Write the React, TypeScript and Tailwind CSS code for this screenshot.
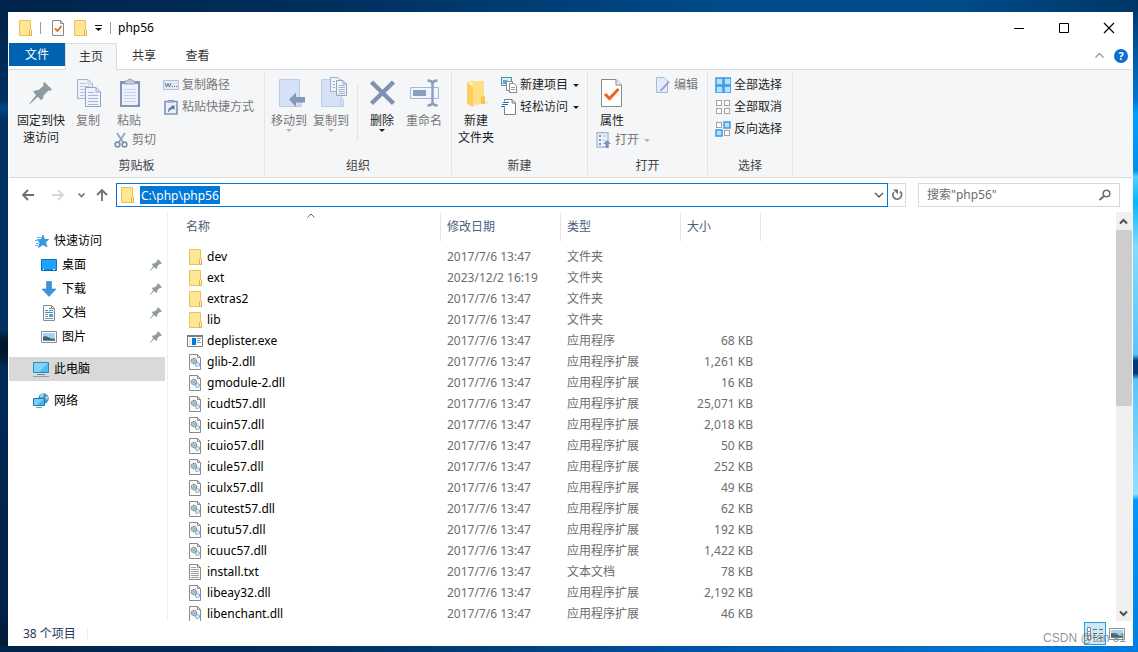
import React from 'react';

type FileKind = 'folder' | 'exe' | 'dll' | 'txt';

interface FileRow {
  name: string;
  kind: FileKind;
  date?: string;
  size?: string;
}

const files: FileRow[] = [
  { name: 'dev', kind: 'folder' },
  { name: 'ext', kind: 'folder', date: '2023/12/2 16:19' },
  { name: 'extras2', kind: 'folder' },
  { name: 'lib', kind: 'folder' },
  { name: 'deplister.exe', kind: 'exe', size: '68 KB' },
  { name: 'glib-2.dll', kind: 'dll', size: '1,261 KB' },
  { name: 'gmodule-2.dll', kind: 'dll', size: '16 KB' },
  { name: 'icudt57.dll', kind: 'dll', size: '25,071 KB' },
  { name: 'icuin57.dll', kind: 'dll', size: '2,018 KB' },
  { name: 'icuio57.dll', kind: 'dll', size: '50 KB' },
  { name: 'icule57.dll', kind: 'dll', size: '252 KB' },
  { name: 'iculx57.dll', kind: 'dll', size: '49 KB' },
  { name: 'icutest57.dll', kind: 'dll', size: '62 KB' },
  { name: 'icutu57.dll', kind: 'dll', size: '192 KB' },
  { name: 'icuuc57.dll', kind: 'dll', size: '1,422 KB' },
  { name: 'install.txt', kind: 'txt', size: '78 KB' },
  { name: 'libeay32.dll', kind: 'dll', size: '2,192 KB' },
  { name: 'libenchant.dll', kind: 'dll', size: '46 KB' },
];

const kindLabels: Record<FileKind, string> = {
  folder: '文件夹',
  exe: '应用程序',
  dll: '应用程序扩展',
  txt: '文本文档',
};

/* ---------- icons ---------- */

function Icon({ size = 16, children }: { size?: number; children: React.ReactNode }) {
  return (
    <svg width={size} height={size} viewBox={`0 0 ${size} ${size}`} fill="none" className="shrink-0" aria-hidden="true">
      {children}
    </svg>
  );
}

const FolderIcon = () => (
  <Icon>
    <path d="M2.5 .5H13.5V9L14.5 10.5V15.5H2.5Z" fill="#ffe596" stroke="#e9c35c" />
    <path d="M12.5 15V10.5L13.5 9.5L14.5 10.5V15.5H12.5" fill="#ffefb5" stroke="#e3b341" />
  </Icon>
);

const Page = ({ stroke = '#8a8a8a' }: { stroke?: string }) => (
  <>
    <path d="M2.5 .5H10.5L13.5 3.5V15.5H2.5Z" fill="#fbfbfb" stroke={stroke} />
    <path d="M10.5 .5V3.5H13.5" stroke={stroke} />
  </>
);

const DllIcon = () => (
  <Icon>
    <Page />
    <circle cx="7" cy="7" r="2.6" fill="#d3dade" stroke="#6f7f89" strokeWidth="1.2" strokeDasharray="1.3 .5" />
    <circle cx="7" cy="7" r="1" fill="#fff" stroke="#6f7f89" strokeWidth=".7" />
    <circle cx="10.5" cy="10.5" r="2" fill="#d9eefa" stroke="#6fabd4" strokeWidth="1.2" strokeDasharray="1.2 .5" />
  </Icon>
);

const TxtIcon = () => (
  <Icon>
    <Page />
    <path d="M4 3.5H9M4 5.5H12M4 7.5H12M4 9.5H12M4 11.5H12M4 13.5H12" stroke="#a0a0a0" />
  </Icon>
);

const ExeIcon = () => (
  <Icon>
    <path d="M.5 2.5H15.5V13.5H.5Z" fill="#fff" stroke="#737e86" />
    <path d="M0 3H16" stroke="#737e86" strokeWidth="2" />
    <path d="M2 5H4V12H2Z" fill="#e4e7e9" />
    <path d="M5 5H9V12H5Z" fill="#0078d7" />
    <path d="M10 5.5H14M10 7.5H13M10 9.5H14" stroke="#8c959b" />
  </Icon>
);

const fileIcons: Record<FileKind, React.ReactNode> = {
  folder: <FolderIcon />,
  exe: <ExeIcon />,
  dll: <DllIcon />,
  txt: <TxtIcon />,
};

const PropsSmallIcon = () => (
  <Icon>
    <Page />
    <path d="M5 8.5L7.5 11L11.5 6" stroke="#e8622a" strokeWidth="1.8" />
  </Icon>
);

const CaretDown = ({ color = '#1e1e1e' }: { color?: string }) => (
  <svg width="6" height="3" viewBox="0 0 6 3" className="shrink-0" aria-hidden="true">
    <path d="M0 0H6L3 3Z" fill={color} />
  </svg>
);

const PinPath = () => (
  <path d="M19.5 5L27 12.5L25 14L23.5 13.5L18.5 18.5Q19 21.5 16.5 23.5L12.8 19.8L5 27L4.5 26.5L11 18L8 14.8Q10.5 12.5 13.8 13L18.8 8.2L18 6.5Z" fill="#8f9ba3" />
);

const PinIcon = () => <Icon size={32}><PinPath /></Icon>;

const PinSmallIcon = () => (
  <svg width="14" height="14" viewBox="3 3 26 26" className="shrink-0" aria-hidden="true">
    <PinPath />
  </svg>
);

const CopyIcon = () => (
  <Icon size={32}>
    <path d="M5.5 2.5H16L20.5 7V21.5H5.5Z" fill="#eef3fb" stroke="#a4b2cc" />
    <path d="M16 2.5V7H20.5M8 6.5H14M8 9.5H18M8 12.5H18M8 15.5H18M8 18.5H18" stroke="#b9c5da" />
    <path d="M13.5 10.5H24L28.5 15V29.5H13.5Z" fill="#eef3fb" stroke="#93a4c3" />
    <path d="M24 10.5V15H28.5" stroke="#93a4c3" />
    <path d="M16 15.5H22M16 18.5H26M16 21.5H26M16 24.5H26M16 27.5H26" stroke="#a9b8d2" />
  </Icon>
);

const PasteIcon = () => (
  <Icon size={32}>
    <path d="M7 4H27V30H7Z" fill="#8496b8" />
    <path d="M9 7H25V27L24 28H9Z" fill="#edf2fb" />
    <path d="M11 12.5H23M11 15.5H23M11 18.5H23M11 21.5H23M11 24.5H23" stroke="#c9d5ea" />
    <path d="M12 7V4H15A2 2 0 0 1 19 4H22V7Z" fill="#c3cee1" stroke="#8fa0be" />
  </Icon>
);

const CutIcon = () => (
  <Icon>
    <path d="M4 1L10 10M12 1L6 10" stroke="#93a3bf" strokeWidth="1.8" />
    <circle cx="4.5" cy="12.5" r="2.4" stroke="#7f91b2" strokeWidth="1.6" />
    <circle cx="11.5" cy="12.5" r="2.4" stroke="#7f91b2" strokeWidth="1.6" />
  </Icon>
);

const CopyPathIcon = () => (
  <Icon>
    <path d="M.5 3.5H15.5V12.5H.5Z" fill="#e3eaf6" stroke="#b3c1d9" />
    <path d="M2 6L3.5 10L5 6.5L6.5 10L8 6M9 9.5H10M11 9.5H12M13 9.5H14" stroke="#5f7192" />
  </Icon>
);

const PasteShortcutIcon = () => (
  <Icon>
    <path d="M2 2.5H14V15H2Z" fill="#eaf0fa" stroke="#8294b6" strokeWidth="1.6" />
    <path d="M5.5 3V1.5H10.5V3Z" fill="#d3dced" stroke="#8294b6" />
    <path d="M5 13Q5 8.5 8.5 8V6.5H11.5V11L10 9.7Q7 10 5.5 13Z" fill="#5c78a8" />
  </Icon>
);

const LightFolderPath = () => (
  <>
    <path d="M6.5 2.5H26.5V21L28.5 23V29.5H6.5Z" fill="#d5e1f4" stroke="#bccce6" />
    <path d="M25.5 29.5V23L27 21.5" stroke="#bccce6" />
  </>
);

const MoveToIcon = () => (
  <Icon size={32}>
    <LightFolderPath />
    <path d="M16 22.5L23 15.5V20H32V25.5H23V30Z" fill="#8798b9" />
  </Icon>
);

const CopyToIcon = () => (
  <Icon size={32}>
    <LightFolderPath />
    <path d="M15.5 .5H23L26.5 4V14.5H15.5Z" fill="#f1f5fc" stroke="#9dadc9" />
    <path d="M21.5 3.5H28L31.5 7V18.5H21.5Z" fill="#f1f5fc" stroke="#93a4c3" />
    <path d="M28 3.5V7H31.5" stroke="#93a4c3" />
    <path d="M17.5 4.5H20M17.5 7.5H20M17.5 10.5H20M23.5 8.5H30M23.5 10.5H30M23.5 12.5H30M23.5 14.5H30M23.5 16.5H30" stroke="#a4b4cf" />
  </Icon>
);

const DeleteIcon = () => (
  <Icon size={32}>
    <path d="M5.5 5L27.5 26.5M27.5 5L5.5 26.5" stroke="#8092b2" strokeWidth="4.5" />
  </Icon>
);

const RenameIcon = () => (
  <Icon size={32}>
    <path d="M2.5 10.5H30.5V21.5H2.5Z" fill="#f0f5fd" stroke="#a6b8d6" />
    <path d="M5 13H18V19H5Z" fill="#8b9dbd" />
    <path d="M19.500 3.5Q23.5 3.5 24.5 6Q25.5 3.5 29.5 3.5M19.5 28.5Q23.5 28.5 24.5 26Q25.5 28.5 29.5 28.5M24.5 5V27" stroke="#8b9dbd" strokeWidth="2.4" />
  </Icon>
);

const NewFolderIcon = () => (
  <Icon size={32}>
    <path d="M26 24L29 26L13 29V26Z" fill="#f3e3b5" />
    <path d="M10 4H24V27H10Z" fill="#ffdf86" />
    <path d="M7 4L13 7V30L7 27Z" fill="#fbd061" />
    <path d="M7 4H10L13 7V10L7 5Z" fill="#ffeeb9" />
    <path d="M21 27V20L23 18L25 20V27Z" fill="#f5c74e" />
  </Icon>
);

const NewItemIcon = () => (
  <Icon>
    <path d="M.5 .5H10.5V8.5H.5Z" fill="#d8eef7" stroke="#4e8fae" />
    <path d="M2 3H6V7H2Z" fill="#64a6c4" />
    <path d="M5.5 4.5H11.5V13.5H5.5Z" fill="#fff" stroke="#8a8a8a" />
    <path d="M8.5 6.5H13L15.5 9V15.5H8.5Z" fill="#fff" stroke="#8a8a8a" />
    <path d="M10 10.5H14M10 12.5H14" stroke="#9b9b9b" />
  </Icon>
);

const EasyAccessIcon = () => (
  <Icon>
    <path d="M3.5 .5H11L14.5 4V15.5H3.5Z" fill="#fff" stroke="#7c7c7c" />
    <path d="M11 .5V4H14.5" stroke="#7c7c7c" />
    <path d="M2 3.5H8M1 5.5H7M0 7.5H4" stroke="#fff" strokeWidth="2" />
    <path d="M2 3.5H8M1 5.5H7M0 7.5H4" stroke="#1f6fb2" strokeWidth="1.2" />
  </Icon>
);

const PropertiesIcon = () => (
  <Icon size={32}>
    <path d="M5.5 2.5H20L25.5 8V29.5H5.5Z" fill="#fff" stroke="#8a8a8a" />
    <path d="M20 2.5V8H25.5" fill="#eee" stroke="#8a8a8a" />
    <path d="M9 17L13.500 21.5L22.5 12" stroke="#f2601b" strokeWidth="3" />
  </Icon>
);

const OpenIcon = () => (
  <Icon>
    <path d="M1 .8H12V15H1Z" fill="#edf3fc" stroke="#a9b9d4" strokeWidth="1.4" />
    <path d="M3 3H5V5H3ZM3 7H5V9H3ZM3 11H5V13H3Z" fill="#7f92b4" />
    <path d="M6.5 4H10.5M6.5 8H9" stroke="#a9b9d4" />
    <path d="M11 8L15 12H12.5V16H9.5V12H7Z" fill="#7f92b4" />
  </Icon>
);

const EditIcon = () => (
  <Icon>
    <path d="M1.5 .5H9L12.5 4V15.5H1.5Z" fill="#e3ebf8" stroke="#a9b9d4" />
    <path d="M13.5 4L5.5 12.5L4.5 14.5L7 13.5L14.5 5.5Z" fill="#8da3c6" />
  </Icon>
);

function CellsIcon({ cells }: { cells: boolean[] }) {
  const all = cells.every(Boolean);
  return (
    <Icon>
      {cells.map((on, i) => {
        const x = (i % 2) * 8 + 1;
        const y = Math.floor(i / 2) * 8 + 1;
        return on ? (
          <rect key={i} x={x} y={y} width={all ? 7 : 6} height={all ? 7 : 6} fill="#b5e1ff" stroke="#2f96e0" strokeWidth="1.4" />
        ) : (
          <rect key={i} x={x + 0.5} y={y + 0.5} width="5" height="5" fill="#fff" stroke="#a3a3a3" />
        );
      })}
    </Icon>
  );
}

const StarIcon = () => (
  <Icon>
    <path d="M10 2L11.5 6.5H15.5L12.5 9.3L14 14L10 11.5L5.5 14.5L7 9.5L4 6.8L8.3 6.4Z" fill="#2f9be6" stroke="#1b7fc8" strokeWidth=".7" />
    <path d="M4 4.5H8M2 7.5H6M3 10.5H7M2 12.5H5" stroke="#6cbcf0" />
  </Icon>
);

const DesktopIcon = () => (
  <Icon>
    <path d="M.5 2.5H15.5V13.5H.5Z" fill="#1fa4fb" stroke="#0a74c4" />
    <path d="M1 13H15" stroke="#0a67b0" />
    <path d="M2 12.5H3M12 12.5H14" stroke="#fff" />
  </Icon>
);

const DownloadIcon = () => (
  <Icon>
    <path d="M5.5 .5H10.5V8H15L8 15.5L1 8H5.5Z" fill="#3c93dd" stroke="#2a7fc8" strokeWidth=".6" />
  </Icon>
);

const DocumentIcon = () => (
  <Icon>
    <Page />
    <path d="M4 5.5H7M8 3.5H10M8 5.5H12M4 7.5H12" stroke="#3f8fd0" />
    <path d="M4 9.5H7M4 11.5H7M4 13.5H12" stroke="#8a9aa6" />
    <path d="M8 9H12V12H8Z" fill="#5aa0c8" />
  </Icon>
);

const PictureIcon = () => (
  <Icon>
    <path d="M.5 2.5H15.5V13.5H.5Z" fill="#fff" stroke="#8f8f8f" />
    <path d="M2 4H14V12H2Z" fill="#a8d2f5" />
    <path d="M2 7.5Q5 6.500 8 8.5T14 9.5V11H2Z" fill="#3c6b66" />
    <path d="M2 11H14V12H2Z" fill="#5d8bb0" />
  </Icon>
);

const ComputerIcon = () => (
  <Icon>
    <path d="M.5 1.5H15.5V11.5H.5Z" fill="#4fbcf5" stroke="#2a87c0" />
    <path d="M1 2H15L6 11H1Z" fill="#83d2fa" />
    <path d="M4 13.5H12" stroke="#5f8db0" />
    <path d="M0 15.5H16" stroke="#8f9fb0" />
  </Icon>
);

const NetworkIcon = () => (
  <Icon>
    <circle cx="10.5" cy="5.5" r="5.2" fill="#4a93bd" />
    <path d="M7 2Q9 .5 11 1L10 4L7.5 5ZM12 4L14.5 3L15 6L13 7Z" fill="#a9d3e3" />
    <path d="M.5 5.5H11.5V12.5H.5Z" fill="#42b3f4" stroke="#1f78b8" />
    <path d="M1 6H11L4 12H1Z" fill="#79cdf9" />
    <path d="M3 14.5H9" stroke="#8a9aa6" />
  </Icon>
);

/* ---------- ribbon ---------- */

interface BigButtonProps {
  icon: React.ReactNode;
  label: React.ReactNode;
  width?: string;
  disabled?: boolean;
  caret?: boolean;
}

function BigButton({ icon, label, width = 'w-9', disabled, caret }: BigButtonProps) {
  return (
    <button
      disabled={disabled}
      className={`flex flex-col items-center shrink-0 leading-[17px] ${width} ${disabled ? 'text-[#777]' : 'text-[#1e1e1e]'}`}
    >
      {icon}
      <span className="mt-[3px] whitespace-nowrap">{label}</span>
      {caret && <CaretDown color={disabled ? '#b5b5b5' : '#1e1e1e'} />}
    </button>
  );
}

interface SmallButtonProps {
  icon: React.ReactNode;
  label: string;
  disabled?: boolean;
  caret?: boolean;
}

function SmallButton({ icon, label, disabled, caret }: SmallButtonProps) {
  return (
    <button
      disabled={disabled}
      className={`flex h-[22px] items-center gap-[3px] whitespace-nowrap ${disabled ? 'text-[#777]' : 'text-[#1e1e1e]'}`}
    >
      {icon}
      <span>{label}</span>
      {caret && <span className="ml-0.5"><CaretDown color={disabled ? '#b5b5b5' : '#1e1e1e'} /></span>}
    </button>
  );
}

const SmallColumn = ({ children }: { children: React.ReactNode }) => (
  <div className="-mt-[3px] flex flex-col">{children}</div>
);

function Group({ label, children, className = '' }: { label: string; children: React.ReactNode; className?: string }) {
  return (
    <section aria-label={label} className="flex flex-col shrink-0 my-0.5 border-r border-[#e1e3e5]">
      <div className={`flex flex-1 items-start pt-[5px] ${className}`}>{children}</div>
      <div className="h-[17px] text-center leading-4 text-[#444]">{label}</div>
    </section>
  );
}

function Ribbon() {
  return (
    <div className="flex h-[109px] shrink-0 border-y border-[#dadbdc] bg-[#f5f6f7]">
      <Group label="剪贴板" className="gap-[7px] pl-2 pr-2.5">
        <BigButton icon={<PinIcon />} label={<>固定到快<br />速访问</>} width="w-12" />
        <BigButton icon={<CopyIcon />} label="复制" width="w-8" disabled />
        <div className="flex flex-col pl-0.5">
          <BigButton icon={<PasteIcon />} label="粘贴" width="w-8" disabled />
          <SmallButton icon={<CutIcon />} label="剪切" disabled />
        </div>
        <SmallColumn>
          <SmallButton icon={<CopyPathIcon />} label="复制路径" disabled />
          <SmallButton icon={<PasteShortcutIcon />} label="粘贴快捷方式" disabled />
        </SmallColumn>
      </Group>
      <Group label="组织" className="gap-1.5 pl-1.5 pr-[9px]">
        <BigButton icon={<MoveToIcon />} label="移动到" disabled caret />
        <BigButton icon={<CopyToIcon />} label="复制到" disabled caret />
        <div className="ml-0.5 mt-2 h-14 w-px bg-[#e1e3e5]" />
        <BigButton icon={<DeleteIcon />} label="删除" caret />
        <BigButton icon={<RenameIcon />} label="重命名" disabled />
      </Group>
      <Group label="新建" className="gap-[7px] pl-1.5 pr-2">
        <BigButton icon={<NewFolderIcon />} label={<>新建<br />文件夹</>} />
        <SmallColumn>
          <SmallButton icon={<NewItemIcon />} label="新建项目" caret />
          <SmallButton icon={<EasyAccessIcon />} label="轻松访问" caret />
        </SmallColumn>
      </Group>
      <Group label="打开" className="gap-[5px] pl-2 pr-[9px]">
        <div className="flex flex-col">
          <BigButton icon={<PropertiesIcon />} label="属性" width="w-8" />
          <SmallButton icon={<OpenIcon />} label="打开" disabled caret />
        </div>
        <SmallColumn>
          <SmallButton icon={<EditIcon />} label="编辑" disabled />
        </SmallColumn>
      </Group>
      <Group label="选择" className="pl-[7px] pr-2.5">
        <SmallColumn>
          <SmallButton icon={<CellsIcon cells={[true, true, true, true]} />} label="全部选择" />
          <SmallButton icon={<CellsIcon cells={[false, false, false, false]} />} label="全部取消" />
          <SmallButton icon={<CellsIcon cells={[false, true, true, false]} />} label="反向选择" />
        </SmallColumn>
      </Group>
    </div>
  );
}

/* ---------- window parts ---------- */

function TitleBar() {
  return (
    <header className="flex h-[31px] shrink-0 items-center pl-2">
      <FolderIcon />
      <span className="ml-[7px] h-3 w-px bg-[#9a9a9a]" />
      <button aria-label="属性" className="ml-[9px]"><PropsSmallIcon /></button>
      <button aria-label="新建文件夹" className="ml-1.5"><FolderIcon /></button>
      <button aria-label="自定义快速访问工具栏" className="ml-1.5 mr-2">
        <svg width="8" height="6" viewBox="0 0 8 6" aria-hidden="true">
          <path d="M1 0H8V1H1ZM1 3H8L4.5 6Z" fill="#111" />
        </svg>
      </button>
      <span className="h-3 w-px bg-[#9a9a9a]" />
      <h1 className="ml-[7px] flex-1 text-black">php56</h1>
      <button aria-label="最小化" className="flex w-[45px] justify-center">
        <Icon><path d="M3 8.5H13" stroke="#000" /></Icon>
      </button>
      <button aria-label="最大化" className="flex w-[45px] justify-center">
        <Icon><path d="M3.5 3.5H12.5V12.5H3.5Z" stroke="#000" /></Icon>
      </button>
      <button aria-label="关闭" className="flex w-[46px] justify-center">
        <Icon><path d="M3 3L13 13M13 3L3 13" stroke="#000" strokeWidth="1.2" /></Icon>
      </button>
    </header>
  );
}

function Tabs() {
  return (
    <nav className="flex h-[26px] shrink-0 items-start leading-6 text-[#333]">
      <button className="h-[23px] w-14 bg-[#0063b1] text-white">文件</button>
      <button className="relative z-10 h-[27px] w-[52px] border border-b-0 border-[#dadbdc] bg-[#f5f6f7]">主页</button>
      <button className="h-[26px] w-[54px]">共享</button>
      <button className="h-[26px] w-[53px]">查看</button>
      <span className="flex-1" />
      <button aria-label="最小化功能区" className="mt-1 mr-1.5">
        <Icon><path d="M3.5 10.5L7.5 6.5L11.500 10.5" stroke="#9b9b9b" strokeWidth="1.3" /></Icon>
      </button>
      <button aria-label="帮助" className="mt-1.5 mr-1 size-3.5 rounded-full bg-[#0a6fd0] text-[11px] font-bold leading-[14px] text-white">?</button>
    </nav>
  );
}

function AddressBar() {
  return (
    <div className="flex h-[34px] shrink-0 items-center pr-3 pl-[11px]">
      <button aria-label="后退">
        <Icon><path d="M14 8H3M8 3L3 8L8 13" stroke="#6f6f6f" strokeWidth="1.8" /></Icon>
      </button>
      <button aria-label="前进" className="ml-3.5" disabled>
        <Icon><path d="M2 8H13M8 3L13 8L8 13" stroke="#d6d6d6" strokeWidth="1.8" /></Icon>
      </button>
      <button aria-label="最近浏览的位置" className="ml-[7px]">
        <Icon><path d="M5.5 6.5L8.5 9.5L11.5 6.5" stroke="#6f6f6f" strokeWidth="1.6" /></Icon>
      </button>
      <button aria-label="上移" className="ml-[5px] mr-1.5">
        <Icon><path d="M8 14V3M3 8L8 3L13 8" stroke="#6f6f6f" strokeWidth="1.8" /></Icon>
      </button>
      <div className="flex h-6 flex-1 items-center border border-[#0078d7] pl-0.5">
        <FolderIcon />
        <input
          aria-label="地址"
          defaultValue="C:\php\php56"
          className="ml-[5px] h-[18px] min-w-0 field-sizing-content bg-[#0078d7] px-px text-white outline-none"
        />
        <span className="flex-1" />
        <button aria-label="展开地址列表">
          <Icon><path d="M4 6L8 10L12 6" stroke="#444" strokeWidth="1.1" /></Icon>
        </button>
      </div>
      <button aria-label="刷新" className="flex h-6 w-[18px] items-center justify-center border border-l-0 border-[#d9d9d9]">
        <Icon>
          <path d="M11 4.500A4.300 4.300 0 1 1 4.800 5.200" stroke="#6f6f6f" strokeWidth="1.800" />
          <path d="M4 2.500H9V7.500Z" fill="#6f6f6f" />
        </Icon>
      </button>
      <label className="ml-3 flex h-6 w-[202px] items-center border border-[#d9d9d9] pl-2 pr-1.5">
        <input aria-label="搜索" placeholder={'搜索"php56"'} className="min-w-0 flex-1 outline-none placeholder:text-[#6d6d6d]" />
        <Icon>
          <circle cx="9.5" cy="6.5" r="3.3" stroke="#6f6f6f" strokeWidth="1.6" />
          <path d="M7 9L2.5 13" stroke="#6f6f6f" strokeWidth="2" />
        </Icon>
      </label>
    </div>
  );
}

function Sidebar() {
  const pinned = [
    { label: '桌面', icon: <DesktopIcon /> },
    { label: '下载', icon: <DownloadIcon /> },
    { label: '文档', icon: <DocumentIcon /> },
    { label: '图片', icon: <PictureIcon /> },
  ];
  const row = 'flex h-6 items-center gap-[5px] pl-6';

  return (
    <aside className="w-[159px] shrink-0 border-r border-[#f0f0f0] pt-[17px] text-black">
      <a href="#quick" className={row}><StarIcon />快速访问</a>
      {pinned.map((item) => (
        <a key={item.label} href="#pinned" className="flex h-6 items-center gap-[5px] pl-8 pr-1">
          {item.icon}
          <span className="flex-1">{item.label}</span>
          <PinSmallIcon />
        </a>
      ))}
      <a href="#pc" className={`${row} mr-0.5 my-2 bg-[#d9d9d9]`}><ComputerIcon />此电脑</a>
      <a href="#network" className={row}><NetworkIcon />网络</a>
    </aside>
  );
}

function FileTable() {
  const columns = ['名称', '修改日期', '类型', '大小'];

  return (
    <div className="flex-1 overflow-hidden">
      <table className="w-[593px] table-fixed text-left text-[#6d6d6d]">
        <colgroup>
          <col className="w-[273px]" />
          <col className="w-[120px]" />
          <col className="w-[120px]" />
          <col className="w-20" />
        </colgroup>
        <thead>
          <tr>
            {columns.map((c, i) => (
              <th key={c} className="relative h-[34px] p-0 align-top font-normal text-[#4c607a]">
                <div className={`mt-px h-7 border-r border-[#e5e5e5] leading-7 ${i === 0 ? 'pl-[18px]' : 'pl-1.5'}`}>{c}</div>
                {i === 0 && (
                  <svg width="8" height="5" viewBox="0 0 8 5" fill="none" className="absolute left-[51%] top-px" aria-hidden="true">
                    <path d="M.5 4.5L4 1L7.5 4.5" stroke="#666" />
                  </svg>
                )}
              </th>
            ))}
          </tr>
        </thead>
        <tbody>
          {files.map((f) => (
            <tr key={f.name} className="h-[21px]">
              <td className="p-0 pl-[19px]">
                <div className="flex items-center gap-1 text-black">
                  {fileIcons[f.kind]}
                  {f.name}
                </div>
              </td>
              <td className="p-0 pl-1.5">{f.date ?? '2017/7/6 13:47'}</td>
              <td className="p-0 pl-1.5">{kindLabels[f.kind]}</td>
              <td className="p-0 pr-2 text-right">{f.size}</td>
            </tr>
          ))}
        </tbody>
      </table>
    </div>
  );
}

function ScrollBar() {
  return (
    <div className="flex w-4 shrink-0 flex-col items-center bg-[#f0f0f0]">
      <button aria-label="向上滚动" className="flex h-[18px] items-center">
        <Icon><path d="M4 10.5L7.5 7L11 10.5" stroke="#505050" strokeWidth="2" /></Icon>
      </button>
      <div className="h-[43%] w-full bg-[#cdcdcd]" />
      <span className="flex-1" />
      <button aria-label="向下滚动" className="flex h-[18px] items-center">
        <Icon><path d="M4 7.5L7.5 11L11 7.5" stroke="#505050" strokeWidth="2" /></Icon>
      </button>
    </div>
  );
}

function StatusBar() {
  return (
    <footer className="relative flex h-[25px] shrink-0 items-center pl-3.5 pr-[7px] text-[#1e395b]">
      <span>38 个项目</span>
      <span className="ml-[11px] h-3 w-px bg-[#eee]" />
      <span className="flex-1" />
      <button aria-label="详细信息" className="flex h-[23px] w-[22px] items-center justify-center border border-[#26a0da] bg-[#cbe8f6]">
        <Icon>
          <path d="M.5 1.5H3.5V13.5H.5ZM.5 5.5H3.5M.5 9.5H3.5" fill="#fff" stroke="#8a8a8a" />
          <path d="M6 3.5H10M12 3.5H16M6 7.5H10M12 7.5H16M6 11.5H10M12 11.5H16" stroke="#6c6c6c" />
        </Icon>
      </button>
      <button aria-label="大图标" className="ml-[3px]"><PictureIcon /></button>
      <span className="absolute right-1.5 top-2 font-['Liberation_Sans',sans-serif] text-xs leading-[18px] text-[#777]/80">CSDN @tan 91</span>
    </footer>
  );
}

export default function App() {
  return (
    <div className="flex h-screen flex-col overflow-hidden font-['Noto_Sans','Noto_Sans_CJK_SC',sans-serif] text-xs">
      <div className="h-3 shrink-0 bg-[linear-gradient(to_right,#00234a,#00305f_30%,#004c8c_65%,#004a88_85%,#003666)]" />
      <div className="flex min-h-0 flex-1">
        <div className="w-2 shrink-0 bg-[linear-gradient(#00234a,#003161_14%,#00488a_15%,#003161_17%,#003262_50%,#00172f_52%,#00172f_54%,#002a55_56%,#00234a_93%,#001a38)]" />
        <main className="flex min-w-0 flex-1 flex-col bg-white px-px">
          <TitleBar />
          <Tabs />
          <Ribbon />
          <AddressBar />
          <div className="flex min-h-0 flex-1">
            <Sidebar />
            <FileTable />
            <ScrollBar />
          </div>
          <StatusBar />
        </main>
        <div className="w-[5px] shrink-0 bg-[linear-gradient(#003b72,#0078d8_14%,#00a0ff_16%,#0090ee_25%,#50d0ff_26%,#00b8ff_30%,#80dcff_37%,#58c4fa_54%,#003a78_55%,#003a78_57%,#58c4fa_58%,#90e0ff_76%,#0098ff_77%,#0080e4)]" />
      </div>
      <div className="h-1.5 shrink-0 bg-[linear-gradient(to_right,#00234a,#003162_30%,#0052a0_60%,#0072cc_85%,#007cdc)]" />
    </div>
  );
}
